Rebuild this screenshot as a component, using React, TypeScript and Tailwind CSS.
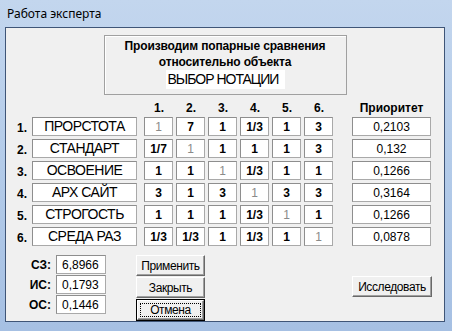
import React from 'react';

type Row = { name: string; cells: string[]; priority: string };

const rows: Row[] = [
  { name: 'ПРОРСТОТА', cells: ['1', '7', '1', '1/3', '1', '3'], priority: '0,2103' },
  { name: 'СТАНДАРТ', cells: ['1/7', '1', '1', '1', '1', '3'], priority: '0,132' },
  { name: 'ОСВОЕНИЕ', cells: ['1', '1', '1', '1/3', '1', '1'], priority: '0,1266' },
  { name: 'АРХ САЙТ', cells: ['3', '1', '3', '1', '3', '3'], priority: '0,3164' },
  { name: 'СТРОГОСТЬ', cells: ['1', '1', '1', '1/3', '1', '1'], priority: '0,1266' },
  { name: 'СРЕДА РАЗ', cells: ['1/3', '1/3', '1', '1/3', '1', '1'], priority: '0,0878' },
];

const stats = [
  { label: 'СЗ:', value: '6,8966' },
  { label: 'ИС:', value: '0,1793' },
  { label: 'ОС:', value: '0,1446' },
];

const edit = 'bg-white border border-[#a9a9a9] border-t-[#8e8e8e] border-l-[#8e8e8e]';

const Button: React.FC<{ label: string; className?: string }> = ({ label, className = '' }) => (
  <div
    className={`h-[21px] flex items-center justify-center bg-[#f0f0f0] border border-t-white border-l-white border-r-[#696969] border-b-[#696969] shadow-[inset_-1px_-1px_0_#a0a0a0] text-[12px] tracking-[-0.4px] text-black ${className}`}
  >
    {label}
  </div>
);

const DefaultButton: React.FC<{ label: string; className?: string }> = ({ label, className = '' }) => (
  <div className={`h-[22px] border border-black ${className}`}>
    <div className="h-full flex items-center justify-center bg-[#f0f0f0] border border-t-white border-l-white border-r-[#696969] border-b-[#696969] shadow-[inset_-1px_-1px_0_#a0a0a0] p-[2px]">
      <div className="w-full h-full flex items-center justify-center border border-dotted border-black text-[12px] tracking-[-0.4px] text-black">
        {label}
      </div>
    </div>
  </div>
);

export default function App() {
  return (
    <div className="w-[452px] h-[331px] flex flex-col bg-gradient-to-b from-[#c3d6ee] via-[#b3cbe9] to-[#a6c0e3] font-['Liberation_Sans',Arial,sans-serif] text-black overflow-hidden">
      {/* title bar */}
      <div className="h-[27px] pl-[7px] flex items-center shrink-0">
        <span className="text-[12px] font-['Noto_Sans',sans-serif] text-black">Работа эксперта</span>
      </div>

      {/* client area */}
      <div className="ml-[5px] w-[440px] h-[295px] border border-[#3f5577] bg-[#f0f0f0] flex flex-col shrink-0">
        {/* header group */}
        <div className="mt-[7px] mx-auto w-[243px] h-[60px] border border-[#a0a0a0] shadow-[inset_1px_1px_0_#ffffff] flex flex-col items-center pt-[2px]">
          <div className="text-[12px] font-bold leading-[16px] tracking-[-0.15px]">Производим попарные сравнения</div>
          <div className="text-[12px] font-bold leading-[16px] tracking-[-0.15px]">относительно объекта</div>
          <div className="w-[119px] h-[19px] bg-white flex items-center pl-[2px] text-[14px] tracking-[-1px] whitespace-nowrap">
            ВЫБОР НОТАЦИИ
          </div>
        </div>

        {/* column headers */}
        <div className="mt-[6px] pl-[11px] h-[14px] flex items-center text-[12px] font-bold leading-[14px]">
          <div className="w-[15px]" />
          <div className="w-[105px]" />
          <div className="ml-[7px] flex gap-[3px]">
            {[1, 2, 3, 4, 5, 6].map(n => (
              <div key={n} className="w-[29px] text-center pl-[1px]">{n}.</div>
            ))}
          </div>
          <div className="ml-[19px] w-[79px] text-center">Приоритет</div>
        </div>

        {/* matrix */}
        <div className="mt-[2px] flex flex-col gap-[3px]">
          {rows.map((row, i) => (
            <div key={row.name} className="pl-[11px] h-[19px] flex items-center">
              <div className="w-[15px] text-[12px] font-bold pt-[3px]">{i + 1}.</div>
              <div className={`w-[105px] h-[19px] ${edit} flex items-center justify-center text-[14px] tracking-[-0.5px] whitespace-nowrap`}>
                {row.name}
              </div>
              <div className="ml-[7px] flex gap-[3px]">
                {row.cells.map((c, j) => (
                  <div
                    key={j}
                    className={`w-[29px] h-[19px] ${edit} flex items-center justify-center text-[12px] ${
                      i === j ? 'text-[#8a8a8a]' : 'font-bold text-black'
                    }`}
                  >
                    {c}
                  </div>
                ))}
              </div>
              <div className={`ml-[19px] w-[79px] h-[19px] ${edit} flex items-center justify-center text-[12px]`}>
                {row.priority}
              </div>
            </div>
          ))}
        </div>

        {/* bottom */}
        <div className="mt-[9px] flex">
          <div className="flex flex-col gap-[1px]">
            {stats.map(s => (
              <div key={s.label} className="flex items-center h-[19px]">
                <div className="w-[45px] text-right text-[12px] font-bold">{s.label}</div>
                <div className={`ml-[5px] w-[50px] h-[19px] ${edit} flex items-center pl-[5px] text-[12px]`}>
                  {s.value}
                </div>
              </div>
            ))}
          </div>
          <div className="ml-[30px] w-[69px] flex flex-col gap-[1px]">
            <Button label="Применить" />
            <Button label="Закрыть" />
            <DefaultButton label="Отмена" />
          </div>
          <Button label="Исследовать" className="ml-[147px] mt-[21px] w-[80px]" />
        </div>
      </div>
    </div>
  );
}
